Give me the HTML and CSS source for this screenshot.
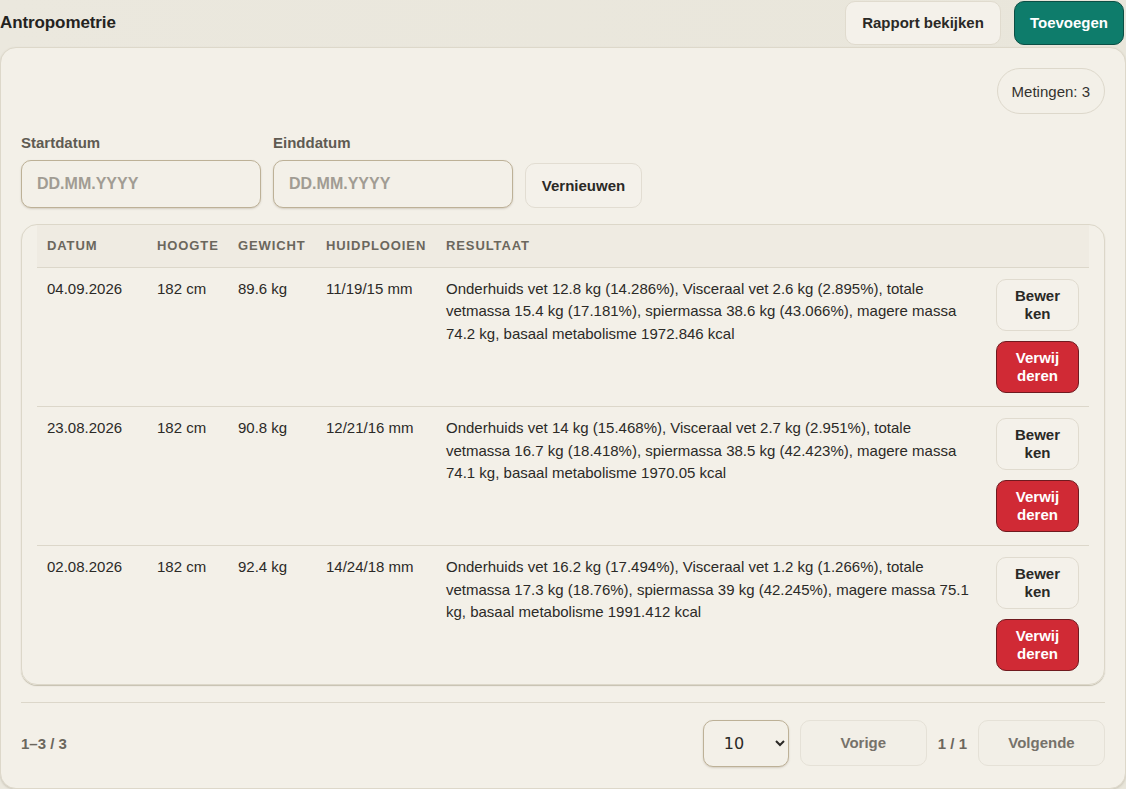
FILE: index.html
```html
<!DOCTYPE html>
<html lang="nl">
<head>
<meta charset="utf-8">
<title>Antropometrie</title>
<link rel="stylesheet" href="styles.css">
</head>
<body>
<div class="page">
  <header class="topbar">
    <h1 class="title">Antropometrie</h1>
    <div class="top-actions">
      <button class="btn btn-light">Rapport bekijken</button>
      <button class="btn btn-primary">Toevoegen</button>
    </div>
  </header>

  <section class="card">
    <div class="count-row">
      <span class="pill">Metingen: 3</span>
    </div>

    <div class="filters">
      <label class="field">
        <span class="field-label">Startdatum</span>
        <input class="date-input" type="text" placeholder="DD.MM.YYYY">
      </label>
      <label class="field">
        <span class="field-label">Einddatum</span>
        <input class="date-input" type="text" placeholder="DD.MM.YYYY">
      </label>
      <button class="btn btn-refresh">Vernieuwen</button>
    </div>

    <div class="table-wrap">
      <table class="data">
        <thead>
          <tr>
            <th class="c-date">Datum</th>
            <th class="c-h">Hoogte</th>
            <th class="c-w">Gewicht</th>
            <th class="c-s">Huidplooien</th>
            <th class="c-r">Resultaat</th>
            <th class="c-a"></th>
          </tr>
        </thead>
        <tbody>
          <tr>
            <td>04.09.2026</td>
            <td>182 cm</td>
            <td>89.6 kg</td>
            <td>11/19/15 mm</td>
            <td>Onderhuids vet 12.8 kg (14.286%), Visceraal vet 2.6 kg (2.895%), totale vetmassa 15.4 kg (17.181%), spiermassa 38.6 kg (43.066%), magere massa 74.2 kg, basaal metabolisme 1972.846 kcal</td>
            <td class="actions">
              <button class="btn btn-edit">Bewerken</button>
              <button class="btn btn-delete">Verwijderen</button>
            </td>
          </tr>
          <tr>
            <td>23.08.2026</td>
            <td>182 cm</td>
            <td>90.8 kg</td>
            <td>12/21/16 mm</td>
            <td>Onderhuids vet 14 kg (15.468%), Visceraal vet 2.7 kg (2.951%), totale vetmassa 16.7 kg (18.418%), spiermassa 38.5 kg (42.423%), magere massa 74.1 kg, basaal metabolisme 1970.05 kcal</td>
            <td class="actions">
              <button class="btn btn-edit">Bewerken</button>
              <button class="btn btn-delete">Verwijderen</button>
            </td>
          </tr>
          <tr>
            <td>02.08.2026</td>
            <td>182 cm</td>
            <td>92.4 kg</td>
            <td>14/24/18 mm</td>
            <td>Onderhuids vet 16.2 kg (17.494%), Visceraal vet 1.2 kg (1.266%), totale vetmassa 17.3 kg (18.76%), spiermassa 39 kg (42.245%), magere massa 75.1 kg, basaal metabolisme 1991.412 kcal</td>
            <td class="actions">
              <button class="btn btn-edit">Bewerken</button>
              <button class="btn btn-delete">Verwijderen</button>
            </td>
          </tr>
        </tbody>
      </table>
    </div>

    <div class="pager">
      <span class="range">1–3 / 3</span>
      <div class="pager-controls">
        <select class="page-size">
          <option>10</option>
          <option>25</option>
          <option>50</option>
        </select>
        <button class="btn btn-page" disabled>Vorige</button>
        <span class="page-num">1 / 1</span>
        <button class="btn btn-page" disabled>Volgende</button>
      </div>
    </div>
  </section>
</div>
</body>
</html>
```

FILE: styles.css
```css
* { box-sizing: border-box; }

html, body {
  margin: 0;
  padding: 0;
}

body {
  background: linear-gradient(90deg, #ebe8de 0%, #e9e6db 100%);
  font-family: "Liberation Sans", Arial, sans-serif;
  color: #2a2926;
  width: 1126px;
  height: 789px;
  overflow: hidden;
}

.page {
  display: flex;
  flex-direction: column;
}

.topbar {
  height: 47px;
  display: flex;
  align-items: flex-start;
  justify-content: space-between;
  padding-right: 2px;
}

.title {
  margin: 0;
  margin-top: 12px;
  font-size: 17px;
  font-weight: 700;
  letter-spacing: -0.1px;
  color: #24231f;
  line-height: 22px;
}

.top-actions {
  display: flex;
  gap: 13px;
  padding-top: 1px;
}

.btn {
  font-family: "Liberation Sans", Arial, sans-serif;
  font-weight: 700;
  font-size: 15px;
  border-radius: 10px;
  cursor: pointer;
  line-height: 18px;
}

.btn-light {
  height: 44px;
  width: 156px;
  padding: 0 14px;
  background: #f4f1ea;
  border: 1px solid #e0dbce;
  color: #2a2926;
}

.btn-primary {
  height: 44px;
  width: 110px;
  background: #0e7c6b;
  border: 1px solid #0b4f45;
  color: #ffffff;
}

.card {
  margin: 0;
  height: 742px;
  background: #f3f0e8;
  border: 1px solid #ddd8ca;
  border-radius: 16px;
  box-shadow: 0 1px 2px rgba(120, 110, 90, 0.25);
  padding: 20px 20px 20px 20px;
  display: flex;
  flex-direction: column;
}

.count-row {
  display: flex;
  justify-content: flex-end;
}

.pill {
  display: inline-flex;
  align-items: center;
  height: 46px;
  padding: 0 14px;
  border: 1px solid #ddd8cb;
  border-radius: 23px;
  font-size: 15px;
  color: #34332f;
}

.filters {
  display: flex;
  align-items: flex-end;
  gap: 12px;
  margin-top: 20px;
}

.field {
  display: flex;
  flex-direction: column;
  gap: 9px;
  width: 240px;
}

.field-label {
  font-size: 15px;
  font-weight: 700;
  color: #5f5b52;
  line-height: 17px;
}

.date-input {
  height: 48px;
  width: 240px;
  border: 1px solid #bdb197;
  border-radius: 10px;
  background: #f3f0e8;
  padding: 0 15px;
  font-family: "Liberation Sans", Arial, sans-serif;
  font-size: 16px;
  font-weight: 700;
  color: #2a2926;
  box-shadow: 0 1px 2px rgba(120, 105, 80, 0.25);
  outline: none;
}

.date-input::placeholder {
  color: #a19c93;
  font-weight: 700;
}

.btn-refresh {
  height: 45px;
  width: 117px;
  background: #f4f1ea;
  border: 1px solid #e2ddd2;
  color: #2a2926;
}

.table-wrap {
  margin-top: 16px;
  border: 1px solid #dcd7c9;
  border-radius: 16px;
  padding: 0 15px;
  box-shadow: 0 1px 1px rgba(140, 130, 105, 0.45);
}

.data {
  width: 100%;
  border-collapse: collapse;
  table-layout: fixed;
}

.data th {
  height: 42px;
  padding: 0 10px;
  background: #efebe2;
  text-align: left;
  font-size: 13px;
  font-weight: 700;
  letter-spacing: 0.9px;
  text-transform: uppercase;
  color: #6b675d;
  border-bottom: 1px solid #dcd7ca;
}

.c-date { width: 110px; }
.c-h { width: 81px; }
.c-w { width: 88px; }
.c-s { width: 120px; }
.c-a { width: 103px; }

.data td {
  padding: 10px 10px 12px 10px;
  vertical-align: top;
  font-size: 15px;
  line-height: 22.5px;
  color: #2b2a27;
  border-bottom: 1px solid #dcd7ca;
}

.data tbody tr:last-child td {
  border-bottom: none;
}

.data td.actions {
  padding: 11px 10px 13px 10px;
  display: flex;
  flex-direction: column;
  gap: 10px;
}

.btn-edit,
.btn-delete {
  width: 83px;
  height: 52px;
  padding: 0 16px;
  word-break: break-all;
  line-height: 17.5px;
  text-align: center;
}

.btn-edit {
  background: #f4f1ea;
  border: 1px solid #e0dbcf;
  color: #2a2926;
}

.btn-delete {
  background: #d02a35;
  border: 1px solid #6f1a1f;
  color: #ffffff;
}

.pager {
  margin-top: 17px;
  border-top: 1px solid #dcd7ca;
  padding-top: 17px;
  display: flex;
  align-items: center;
  justify-content: space-between;
}

.range {
  font-size: 15px;
  font-weight: 700;
  color: #6b675d;
}

.pager-controls {
  display: flex;
  align-items: center;
  gap: 11px;
}

.page-size {
  width: 86px;
  height: 47px;
  border: 1px solid #bdb197;
  border-radius: 10px;
  background: #f3f0e8;
  padding: 0 12px 0 16px;
  font-family: "DejaVu Sans", sans-serif;
  font-size: 16px;
  color: #2a2926;
  box-shadow: 0 1px 2px rgba(120, 105, 80, 0.25);
}

.btn-page {
  height: 46px;
  width: 127px;
  background: #f2efe7;
  border: 1px solid #e5e1d7;
  color: #76726a;
  cursor: default;
}

.page-num {
  font-size: 15px;
  font-weight: 700;
  color: #6b675d;
}
```
